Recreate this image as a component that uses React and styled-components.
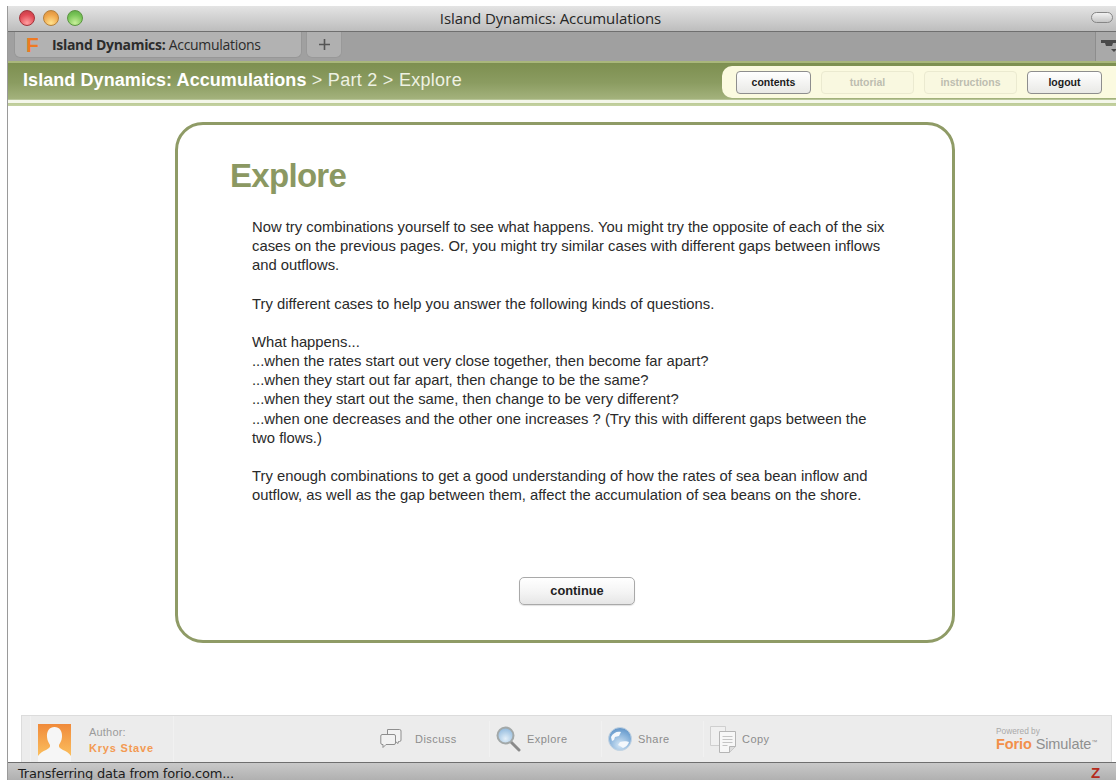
import React from 'react'
import styled, { createGlobalStyle } from 'styled-components'

const GlobalStyle = createGlobalStyle`
  html, body {
    margin: 0;
    padding: 0;
    background: #fff;
    font-family: "Liberation Sans", Arial, sans-serif;
  }
  * {
    box-sizing: border-box;
  }
`

const Page = styled.div`
  width: 1116px;
  height: 780px;
  overflow: hidden;
  background: #fff;
  padding: 6px 0 0 7px;
`

const Browser = styled.div`
  height: 774px;
  display: flex;
  flex-direction: column;
  border-left: 1px solid #9a9a9a;
`

const TitleBar = styled.div`
  height: 26px;
  flex: none;
  display: flex;
  align-items: center;
  padding: 0 3px 2px 11px;
  background: linear-gradient(#e4e4e4, #bdbdbd);
  border-bottom: 1px solid #6f6f6f;
`

const Light = styled.span`
  width: 16px;
  height: 16px;
  margin-right: 8px;
  flex: none;
  border-radius: 50%;
  border: 1px solid ${p => p.$edge};
  background: radial-gradient(circle at 50% 85%, ${p => p.$glow} 0%, ${p => p.$base} 60%, ${p => p.$top} 100%);
`

const WindowTitle = styled.div`
  flex: 1;
  text-align: center;
  font: 15px "Open Sans", "DejaVu Sans", sans-serif;
  letter-spacing: -0.1px;
  color: #262626;
  margin-left: -81px;
`

const Pill = styled.span`
  width: 22px;
  height: 11px;
  border-radius: 6px;
  border: 1px solid #868686;
  background: linear-gradient(#f2f2f2, #c6c6c6);
`

const TabStrip = styled.div`
  height: 29px;
  flex: none;
  display: flex;
  background: #a0a0a0;
  padding-left: 6px;
`

const Tab = styled.div`
  width: 288px;
  height: 26px;
  display: flex;
  align-items: center;
  border-radius: 0 0 6px 6px;
  background: #b2b2b2;
  border: 1px solid #979797;
  border-top: 0;
  padding-left: 11px;
`

const Favicon = styled.span`
  width: 26px;
  font: bold 21px "Liberation Sans", sans-serif;
  color: #ee7a22;
`

const TabLabel = styled.span`
  font: bold 14px "Open Sans", "DejaVu Sans", sans-serif;
  letter-spacing: -0.3px;
  color: #2c2c2c;
  white-space: nowrap;
  b {
    font-weight: 400;
  }
`

const NewTab = styled.div`
  width: 36px;
  height: 26px;
  margin-left: 4px;
  border-radius: 0 0 6px 6px;
  background: #b0b0b0;
  border: 1px solid #999;
  border-top: 0;
  display: flex;
  align-items: center;
  justify-content: center;
`

const TabEnd = styled.div`
  margin-left: auto;
  width: 21px;
  border-left: 1px solid #8d8d8d;
  background: #a9a9a9;
  padding: 7px 0 0 5px;
  overflow: hidden;
`

const Banner = styled.header`
  height: 45px;
  flex: none;
`

const BannerFill = styled.div`
  height: 39px;
  display: flex;
  align-items: center;
  justify-content: space-between;
  padding-left: 15px;
  border-top: 2px solid #a9b77b;
  border-bottom: 1px solid #b7c497;
  background: linear-gradient(#7d8f50, #8b9c61 55%, #a3b27c);
`

const BannerTail = styled.div`
  height: 6px;
  background: linear-gradient(#f4f7ea 0, #f4f7ea 50%, #bccb97 50%, #c5d2a3 100%);
`

const Crumbs = styled.div`
  font-size: 18px;
  letter-spacing: 0.28px;
  color: #eef1e2;
  white-space: nowrap;
  padding-bottom: 2px;
  b {
    letter-spacing: 0.07px;
    color: #fff;
  }
`

const NavPanel = styled.nav`
  width: 394px;
  height: 32px;
  margin-top: 2px;
  display: flex;
  align-items: center;
  gap: 10px;
  padding: 0 13px 0 14px;
  border-radius: 10px 0 0 10px;
  background: #fbfae0;
`

const NavButton = styled.span`
  height: 23px;
  width: ${p => p.$width}px;
  flex: none;
  display: flex;
  align-items: center;
  justify-content: center;
  font-size: 10.5px;
  font-weight: bold;
  border-radius: 4px;
  color: ${p => (p.$off ? '#bdbdb0' : '#1c1c1c')};
  border: 1px solid ${p => (p.$off ? '#ebead0' : '#8e8e8e')};
  background: ${p => (p.$off ? '#f9f8e0' : 'linear-gradient(#fff, #e9e9e6)')};
`

const Main = styled.main`
  flex: 1;
  background: #fff;
  padding: 16px 0 0 167px;
`

const Card = styled.section`
  width: 780px;
  height: 521px;
  border: 3px solid #8f9b66;
  border-radius: 28px;
  padding: 30px 0 0 52px;
  display: flex;
  flex-direction: column;
`

const Heading = styled.h1`
  margin: 0 0 22px;
  font-size: 33px;
  line-height: 41px;
  letter-spacing: -0.7px;
  font-weight: bold;
  color: #8b9862;
`

const Copy = styled.div`
  margin-left: 22px;
  width: 640px;
  font-size: 14.8px;
  line-height: 19.15px;
  color: #2a2a2a;
  p {
    margin: 0 0 19.15px;
  }
`

const Continue = styled.button`
  width: 116px;
  height: 28px;
  margin: 53px 0 0 289px;
  padding: 0 0 2px;
  font: bold 12.8px "Liberation Sans", sans-serif;
  color: #222;
  border: 1px solid #a9a9a9;
  border-radius: 5px;
  background: linear-gradient(#fff, #f4f4f4 55%, #e6e6e6);
  box-shadow: 0 1px 1px rgba(0, 0, 0, 0.12);
`

const FooterWrap = styled.div`
  flex: none;
  background: #fff;
  padding-left: 13px;
  padding-right: 4px;
`

const Footer = styled.footer`
  height: 47px;
  display: flex;
  align-items: center;
  background: #ececec;
  border: 1px solid #dcdcdc;
  border-bottom: 0;
  overflow: hidden;
`

const AuthorBlock = styled.div`
  width: 144px;
  height: 46px;
  margin-right: 206px;
  margin-left: 8px;
  padding: 8px 0 0 7px;
  display: flex;
  gap: 18px;
  border-left: 1px solid #f1f1f1;
  border-right: 1px solid #f1f1f1;
`

const Avatar = styled.div`
  width: 33px;
  height: 38px;
  flex: none;
`

const AuthorText = styled.div`
  font-size: 11px;
  line-height: 16px;
  letter-spacing: 0.2px;
  color: #9b9b9b;
  strong {
    display: block;
    letter-spacing: 0.8px;
    color: #f39a52;
  }
`

const Action = styled.div`
  display: flex;
  align-items: center;
  width: ${p => p.$width}px;
  height: 36px;
  flex: none;
  & + & {
    padding-left: 6px;
    border-left: 1px solid #f1f1f1;
  }
`

const ActionIcon = styled.span`
  width: ${p => p.$slot}px;
  height: 32px;
  flex: none;
  display: flex;
  align-items: center;
`

const ActionLabel = styled.span`
  font-size: 11px;
  letter-spacing: 0.45px;
  color: #8c8c8c;
`

const Powered = styled.div`
  margin-left: auto;
  width: 100px;
  margin-right: 15px;
  white-space: nowrap;
`

const PoweredBy = styled.div`
  font-size: 8.3px;
  line-height: 9px;
  color: #a9a9a9;
`

const PoweredName = styled.div`
  font-size: 14.5px;
  line-height: 16px;
  letter-spacing: -0.1px;
  color: #8f8f8f;
  b {
    color: #f2904a;
  }
  sup {
    font-size: 6px;
    line-height: 0;
    vertical-align: 5px;
  }
`

const StatusBar = styled.div`
  height: 18px;
  flex: none;
  display: flex;
  align-items: center;
  justify-content: space-between;
  padding: 3px 16px 0 10px;
  border-top: 1px solid #6e6e6e;
  background: linear-gradient(#c9c9c9, #b0b0b0);
  font: 13px "DejaVu Sans", sans-serif;
  letter-spacing: -0.2px;
  color: #1c1c1c;
  white-space: nowrap;
`

const ZMark = styled.span`
  font: bold 15px/14px "Liberation Sans", sans-serif;
  color: #b52a1c;
`

const lights = [
  { edge: '#a3333a', top: '#b93c46', base: '#e24a55', glow: '#ff9fa0' },
  { edge: '#b5803a', top: '#d68b3c', base: '#efa64b', glow: '#ffe28e' },
  { edge: '#5b9440', top: '#5ba644', base: '#79c557', glow: '#c8f09a' }
]

const DiscussIcon = () => (
  <svg width="22" height="22" viewBox="0 0 22 22" fill="#f2f2f2" stroke="#8e8e8e" strokeWidth="1">
    <path d="M7.5 1.5h12a1.5 1.5 0 0 1 1.5 1.500v9a1.5 1.5 0 0 1-1.5 1.5h-1l-.5 2-2.5-2h-8z" />
    <path d="M2 6.500h12a1.500 1.500 0 0 1 1.500 1.500v7a1.500 1.500 0 0 1-1.500 1.500H6l-3 3v-3H2A1.500 1.500 0 0 1 .8 15V8A1.500 1.500 0 0 1 2 6.500z" />
  </svg>
)

const MagnifierIcon = () => (
  <svg width="25" height="26" viewBox="0 0 25 26">
    <defs>
      <radialGradient id="lens" cx="0.5" cy="0.7" r="0.7">
        <stop offset="0" stopColor="#e4f0f9" />
        <stop offset="1" stopColor="#8db7dc" />
      </radialGradient>
    </defs>
    <path d="M15 16l8 8" stroke="#8a8a8a" strokeWidth="3" strokeLinecap="round" />
    <circle cx="9.5" cy="9.5" r="8" fill="url(#lens)" stroke="#a3a8a8" strokeWidth="2" />
  </svg>
)

const GlobeIcon = () => (
  <svg width="24" height="24" viewBox="0 0 24 24">
    <defs>
      <radialGradient id="sphere" cx="0.5" cy="0.75" r="0.8">
        <stop offset="0" stopColor="#d5e7f6" />
        <stop offset="0.7" stopColor="#79a8d5" />
        <stop offset="1" stopColor="#5d8fc2" />
      </radialGradient>
    </defs>
    <circle cx="12" cy="12" r="11.5" fill="url(#sphere)" stroke="#c4d4e2" strokeWidth="1" />
    <path d="M3 10c2-4 6-6 10-5l-2 4-4 1-1 3-2 1zM12 15c3-1 7-1 9 0-1 3-3 5-6 6l-3-2-2-1z" fill="#f4f8fc" />
  </svg>
)

const CopyIcon = () => (
  <svg width="27" height="27" viewBox="0 0 27 27" fill="#f7f7f7" stroke="#b5b5b5" strokeWidth="1">
    <path d="M.5.5h15v19H.5z" fill="#f0f0f0" stroke="#cfcfcf" />
    <path d="M9.500 5.500h16v15l-6 6h-10z" />
    <path d="M25.500 20.500h-6v6" fill="#ddd" />
    <path d="M12.500 10.500h10M12.500 13.500h10M12.500 16.500h10M12.500 19.500h5" stroke="#c4c4c4" fill="none" />
  </svg>
)

const App = () => (
  <Page>
    <GlobalStyle />
    <Browser>
      <TitleBar>
        {lights.map(l => (
          <Light key={l.base} $edge={l.edge} $top={l.top} $base={l.base} $glow={l.glow} />
        ))}
        <WindowTitle>Island Dynamics: Accumulations</WindowTitle>
        <Pill />
      </TitleBar>
      <TabStrip>
        <Tab>
          <Favicon>F</Favicon>
          <TabLabel>
            Island Dynamics: <b>Accumulations</b>
          </TabLabel>
        </Tab>
        <NewTab>
          <svg width="13" height="13" viewBox="0 0 13 13">
            <path d="M6.500 1v11M1 6.500h11" stroke="#555" strokeWidth="1.6" />
          </svg>
        </NewTab>
        <TabEnd>
          <svg width="16" height="14" viewBox="0 0 16 14">
            <path d="M0 1h16v3H12l-1 3H5L4 4H0zM10 10h6l-3 3z" fill="#4a4a4a" />
          </svg>
        </TabEnd>
      </TabStrip>
      <Banner>
        <BannerFill>
          <Crumbs>
            <b>Island Dynamics: Accumulations</b> &gt; Part 2 &gt; Explore
          </Crumbs>
          <NavPanel>
            <NavButton $width={75}>contents</NavButton>
            <NavButton $width={93} $off>tutorial</NavButton>
            <NavButton $width={93} $off>instructions</NavButton>
            <NavButton $width={75}>logout</NavButton>
          </NavPanel>
        </BannerFill>
        <BannerTail />
      </Banner>
      <Main>
        <Card>
          <Heading>Explore</Heading>
          <Copy>
            <p>
              Now try combinations yourself to see what happens. You might try the opposite of each of the six
              cases on the previous pages. Or, you might try similar cases with different gaps between inflows
              and outflows.
            </p>
            <p>Try different cases to help you answer the following kinds of questions.</p>
            <p>
              What happens...
              <br />
              ...when the rates start out very close together, then become far apart?
              <br />
              ...when they start out far apart, then change to be the same?
              <br />
              ...when they start out the same, then change to be very different?
              <br />
              ...when one decreases and the other one increases ? (Try this with different gaps between the
              two flows.)
            </p>
            <p>
              Try enough combinations to get a good understanding of how the rates of sea bean inflow and
              outflow, as well as the gap between them, affect the accumulation of sea beans on the shore.
            </p>
          </Copy>
          <Continue>continue</Continue>
        </Card>
      </Main>
      <FooterWrap>
        <Footer>
          <AuthorBlock>
            <Avatar>
              <svg width="33" height="38" viewBox="0 0 33 38">
                <defs>
                  <linearGradient id="portrait" x1="0" y1="0" x2="0" y2="1">
                    <stop offset="0" stopColor="#f08a3a" />
                    <stop offset="1" stopColor="#fbbf5e" />
                  </linearGradient>
                </defs>
                <path d="M0 0h33v32H0z" fill="url(#portrait)" />
                <path d="M16.500 3c5 0 8 4 7.500 10-.3 4-2 6-3 8-.5 2 1 3.500 4 5 3 1 6 3 8 6v6H0v-6c2-3 5-5 8-6 3-1.500 4.500-3 4-5-1-2-2.700-4-3-8-.5-6 2.500-10 7.500-10z" fill="#f6f6f6" />
              </svg>
            </Avatar>
            <AuthorText>
              Author:
              <strong>Krys Stave</strong>
            </AuthorText>
          </AuthorBlock>
          <Action $width={109}>
            <ActionIcon $slot={35}><DiscussIcon /></ActionIcon>
            <ActionLabel>Discuss</ActionLabel>
          </Action>
          <Action $width={112}>
            <ActionIcon $slot={31}><MagnifierIcon /></ActionIcon>
            <ActionLabel>Explore</ActionLabel>
          </Action>
          <Action $width={102}>
            <ActionIcon $slot={30}><GlobeIcon /></ActionIcon>
            <ActionLabel>Share</ActionLabel>
          </Action>
          <Action $width={84}>
            <ActionIcon $slot={32}><CopyIcon /></ActionIcon>
            <ActionLabel>Copy</ActionLabel>
          </Action>
          <Powered>
            <PoweredBy>Powered by</PoweredBy>
            <PoweredName>
              <b>Forio</b> Simulate<sup>™</sup>
            </PoweredName>
          </Powered>
        </Footer>
      </FooterWrap>
      <StatusBar>
        Transferring data from forio.com...
        <ZMark>Z</ZMark>
      </StatusBar>
    </Browser>
  </Page>
)

export default App
